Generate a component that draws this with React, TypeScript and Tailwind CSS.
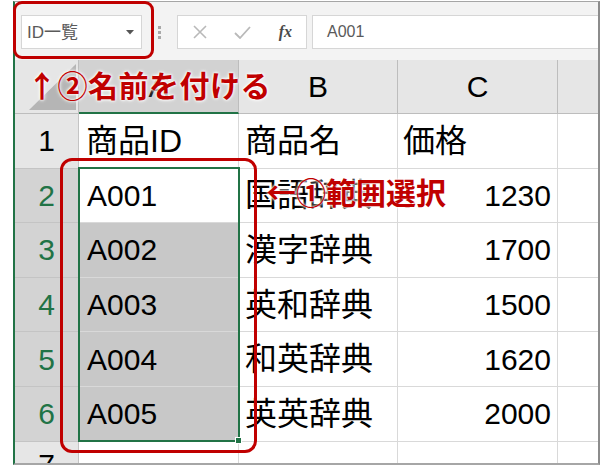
import React from 'react';

const rows = [
  { n: 1, id: '商品ID', name: '商品名', price: '価格' },
  { n: 2, id: 'A001', name: '国語辞典', price: '1230' },
  { n: 3, id: 'A002', name: '漢字辞典', price: '1700' },
  { n: 4, id: 'A003', name: '英和辞典', price: '1500' },
  { n: 5, id: 'A004', name: '和英辞典', price: '1620' },
  { n: 6, id: 'A005', name: '英英辞典', price: '2000' },
];

const Toolbar: React.FC = () => (
  <div className="flex items-start h-[58px] bg-[#f3f3f3] pt-[13px] shrink-0">
    {/* name box */}
    <div className="ml-[6px] w-[121px] h-[34px] bg-white border border-[#d6d6d6] flex items-center justify-between pl-[5px] pr-[7px]">
      <span className="text-[17px] text-[#5a5a5a] leading-none">ID一覧</span>
      <svg width="8" height="5" viewBox="0 0 8 5">
        <path d="M0 0 L8 0 L4 4.5 Z" fill="#555" />
      </svg>
    </div>
    {/* dots */}
    <div className="ml-[16px] mt-[11px] flex flex-col gap-[2px]">
      <span className="w-[3px] h-[3px] bg-[#a8a8a8]" />
      <span className="w-[3px] h-[3px] bg-[#a8a8a8]" />
      <span className="w-[3px] h-[3px] bg-[#a8a8a8]" />
    </div>
    {/* buttons */}
    <div className="ml-[16px] w-[130px] h-[34px] bg-white border border-[#d6d6d6] flex items-center">
      <span className="w-[44px] flex justify-center">
        <svg width="14" height="14" viewBox="0 0 14 14">
          <path d="M1 1 L13 13 M13 1 L1 13" stroke="#b9b9b9" strokeWidth="1.6" />
        </svg>
      </span>
      <span className="w-[44px] flex justify-center">
        <svg width="17" height="13" viewBox="0 0 17 13">
          <path d="M1 7 L6 12 L16 1" stroke="#b9b9b9" strokeWidth="1.8" fill="none" />
        </svg>
      </span>
      <span className="w-[42px] flex justify-center font-['Liberation_Serif',serif] italic font-bold text-[16px] text-[#4a4a4a] leading-none">
        fx
      </span>
    </div>
    {/* formula input */}
    <div className="ml-[5px] flex-1 h-[34px] bg-white border border-[#d6d6d6] border-r-0 flex items-center pl-[14px]">
      <span className="text-[16px] text-[#5a5a5a] leading-none">A001</span>
    </div>
  </div>
);

const Grid: React.FC = () => (
  <div className="flex flex-col flex-1 overflow-hidden">
    {/* column headers */}
    <div className="flex h-[54px] shrink-0">
      <div className="w-[64px] bg-[#e6e6e6] border-r border-b border-[#bdbdbd] flex items-end justify-end pr-[2px] pb-[3px]">
        <svg width="47" height="46" viewBox="0 0 47 46">
          <path d="M47 0 L47 46 L0 46 Z" fill="#b5b5b5" />
        </svg>
      </div>
      <div className="w-[160px] bg-[#d2d2d2] border-r border-[#bdbdbd] border-b-2 border-b-[#217346] flex items-center justify-center text-[30px] text-[#222]">
        A
      </div>
      <div className="w-[159px] bg-[#e6e6e6] border-r border-b border-[#bdbdbd] flex items-center justify-center text-[30px] text-black">
        B
      </div>
      <div className="w-[160px] bg-[#e6e6e6] border-r border-b border-[#bdbdbd] flex items-center justify-center text-[30px] text-black">
        C
      </div>
      <div className="flex-1 bg-[#e6e6e6] border-b border-[#bdbdbd]" />
    </div>
    {rows.map((r) => {
      const sel = r.n >= 2;
      return (
        <div key={r.n} className="flex h-[54.6px] shrink-0">
          <div
            className={
              sel
                ? 'w-[64px] bg-[#d3d3d3] border-r border-b border-[#c4c4c4] flex items-center justify-center text-[30px] text-[#217346]'
                : 'w-[64px] bg-[#e6e6e6] border-r border-b border-[#c4c4c4] flex items-center justify-center text-[30px] text-black'
            }
          >
            {r.n}
          </div>
          <div
            className={
              r.n >= 3
                ? 'w-[160px] bg-[#c8c8c8] border-r border-b border-[#d9d9d9] flex items-center pl-[8px] text-[30px] text-black'
                : r.n === 1
                ? 'w-[160px] bg-white border-r border-b border-[#d9d9d9] flex items-center pl-[7px] text-[32px] text-black'
                : 'w-[160px] bg-white border-r border-b border-[#d9d9d9] flex items-center pl-[8px] text-[30px] text-black'
            }
          >
            {r.id}
          </div>
          <div className="w-[159px] bg-white border-r border-b border-[#d9d9d9] flex items-center pl-[6px] text-[32px] text-black">
            {r.name}
          </div>
          <div
            className={
              r.n === 1
                ? 'w-[160px] bg-white border-r border-b border-[#d9d9d9] flex items-center pl-[5px] text-[32px] text-black'
                : 'w-[160px] bg-white border-r border-b border-[#d9d9d9] flex items-center justify-end pr-[6px] text-[30px] text-black'
            }
          >
            {r.price}
          </div>
          <div className="flex-1 bg-white border-b border-[#d9d9d9]" />
        </div>
      );
    })}
    {/* row 7 */}
    <div className="flex flex-1">
      <div className="w-[64px] bg-[#e6e6e6] border-r border-[#c4c4c4] flex justify-center pt-[8px] text-[30px] text-black leading-none">
        7
      </div>
      <div className="w-[160px] bg-white border-r border-[#d9d9d9]" />
      <div className="w-[159px] bg-white border-r border-[#d9d9d9]" />
      <div className="w-[160px] bg-white border-r border-[#d9d9d9]" />
      <div className="flex-1 bg-white" />
    </div>
  </div>
);

export default function App() {
  return (
    <div className="relative w-[600px] h-[466px] bg-white overflow-hidden font-['Liberation_Sans','Noto_Sans_CJK_JP',sans-serif]">
      <div className="ml-[13px] mt-[1px] w-[587px] h-[464px] border-l-2 border-l-[#217346] border-t border-t-[#a6a6a6] border-r-2 border-r-[#8c8c8c] border-b-2 border-b-[#a6a6a6] flex flex-col">
        <Toolbar />
        <Grid />
      </div>

      {/* selection border + fill handle */}
      <div className="absolute left-[78px] top-[167px] w-[162px] h-[275px] border-2 border-[#217346] pointer-events-none" />
      <div className="absolute left-[235px] top-[437px] w-[7px] h-[7px] bg-[#217346] border border-white" />

      {/* red callout boxes */}
      <div className="absolute left-[13px] top-[1px] w-[141px] h-[58px] border-[3px] border-[#c00000] rounded-[9px]" />
      <div className="absolute left-[60px] top-[158px] w-[197px] h-[295px] border-[3px] border-[#c00000] rounded-[12px]" />

      {/* annotations */}
      <span className="absolute left-[27px] top-[69px] font-['Noto_Sans_CJK_JP',sans-serif] font-bold text-[30px] tracking-[0.5px] leading-none text-[#c00000] whitespace-nowrap [text-shadow:0_0_2px_#fff,0_0_3px_#fff,0_0_4px_#fff]">
        ↑②名前を付ける
      </span>
      <span className="absolute left-[266px] top-[176px] font-['Noto_Sans_CJK_JP',sans-serif] font-bold text-[30px] leading-none text-[#c00000] whitespace-nowrap [text-shadow:0_0_2px_#fff,0_0_3px_#fff,0_0_4px_#fff]">
        ←①範囲選択
      </span>
    </div>
  );
}
